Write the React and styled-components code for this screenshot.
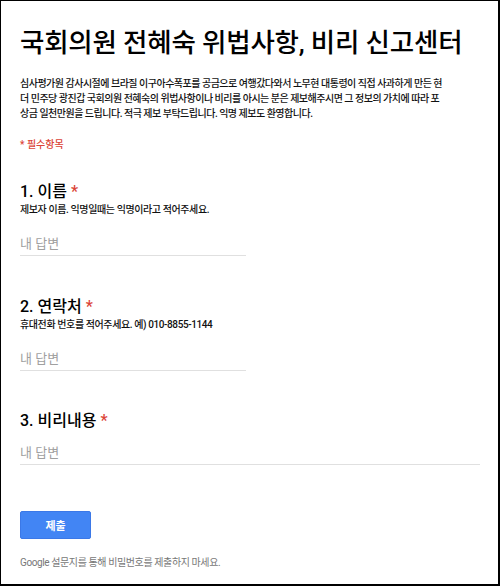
import React from "react";
import styled, { createGlobalStyle } from "styled-components";

const Global = createGlobalStyle`
    html, body {
        margin: 0;
        padding: 0;
        background: #fff;
    }
    body {
        font-family: Roboto, "Noto Sans CJK KR", sans-serif;
        color: #212121;
    }
    input::placeholder {
        color: #a0a0a0;
        opacity: 1;
    }
`;

const Frame = styled.div`
    box-sizing: border-box;
    width: 500px;
    height: 586px;
    border: 1px solid #000;
    border-right-width: 2px;
    border-bottom-width: 2px;
    padding: 26px 19px 0 19px;
    display: flex;
    flex-direction: column;
`;

const Title = styled.h1`
    margin: 0;
    font-size: 26.5px;
    line-height: 32px;
    font-weight: 500;
    letter-spacing: -0.2px;
    color: #000;
`;

const Desc = styled.div`
    margin-top: 17px;
    font-size: 10px;
    line-height: 15px;
    letter-spacing: -0.5px;
    font-weight: 500;
    color: #111;
`;

const Line = styled.span`
    display: block;
    white-space: nowrap;
`;

const Required = styled.div`
    margin-top: 16px;
    font-size: 10px;
    line-height: 15px;
    font-weight: 500;
    color: #db4437;
`;

const Question = styled.div`
    margin-top: ${(p) => p.gap}px;
    display: flex;
    flex-direction: column;
`;

const QTitle = styled.div`
    font-size: 16px;
    line-height: 20px;
    font-weight: 500;
    color: #000;
`;

const Star = styled.span`
    color: #db4437;
    margin-left: 4px;
`;

const Help = styled.div`
    margin-top: ${(p) => p.gap}px;
    font-size: 10px;
    line-height: 14px;
    letter-spacing: -0.4px;
    font-weight: 500;
    color: #111;
`;

const Answer = styled.input`
    box-sizing: border-box;
    margin-top: ${(p) => p.gap}px;
    width: ${(p) => (p.wide ? 460 : 226)}px;
    height: 25px;
    padding: 0;
    border: none;
    border-bottom: 1px solid #e0e0e0;
    outline: none;
    font-family: Roboto, "Noto Sans CJK KR", sans-serif;
    font-size: 13px;
    color: #212121;
    background: transparent;
`;

const Submit = styled.button`
    box-sizing: border-box;
    margin-top: 46px;
    width: 71px;
    height: 28px;
    border: 1px solid #3b78e7;
    border-radius: 2px;
    background: #4285f4;
    color: #fff;
    font-family: Roboto, "Noto Sans CJK KR", sans-serif;
    font-size: 11px;
    font-weight: 700;
    cursor: pointer;
`;

const Footer = styled.div`
    margin-top: 17px;
    font-size: 10px;
    line-height: 14px;
    letter-spacing: -0.4px;
    color: #777;
`;

const questions = [
    { title: "1. 이름", help: "제보자 이름. 익명일때는 익명이라고 적어주세요.", gap: 30 },
    { title: "2. 연락처", help: "휴대전화 번호를 적어주세요. 예) 010-8855-1144", gap: 41 },
    { title: "3. 비리내용", help: null, gap: 40, wide: true },
];

const App = () => {
    return (
        <>
            <Global />
            <Frame>
                <Title>국회의원 전혜숙 위법사항, 비리 신고센터</Title>
                <Desc>
                    <Line>심사평가원 감사시절에 브라질 이구아수폭포를 공금으로 여행갔다와서 노무현 대통령이 직접 사과하게 만든 현</Line>
                    <Line>더 민주당 광진갑 국회의원 전혜숙의 위법사항이나 비리를 아시는 분은 제보해주시면 그 정보의 가치에 따라 포</Line>
                    <Line>상금 일천만원을 드립니다. 적극 제보 부탁드립니다. 익명 제보도 환영합니다.</Line>
                </Desc>
                <Required>* 필수항목</Required>
                {questions.map((q) => (
                    <Question key={q.title} gap={q.gap}>
                        <QTitle>
                            {q.title}
                            <Star>*</Star>
                        </QTitle>
                        {q.help && <Help gap={1}>{q.help}</Help>}
                        <Answer
                            gap={q.help ? 14 : 9}
                            wide={q.wide}
                            placeholder="내 답변"
                        />
                    </Question>
                ))}
                <div>
                    <Submit>제출</Submit>
                </div>
                <Footer>Google 설문지를 통해 비밀번호를 제출하지 마세요.</Footer>
            </Frame>
        </>
    );
};

export default App;
